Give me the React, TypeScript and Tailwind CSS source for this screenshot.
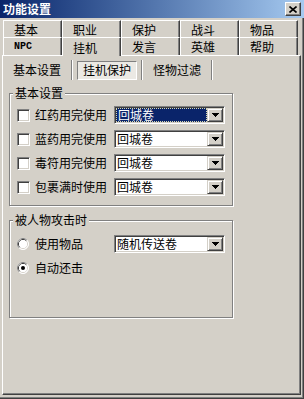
import React from "react";

const cjk = "font-['Noto_Sans_CJK_SC','Noto_Sans',sans-serif]";

const raised =
  "border border-t-white border-l-white border-r-[#404040] border-b-[#404040] shadow-[inset_-1px_-1px_0_#808080]";
const sunken =
  "border border-t-[#808080] border-l-[#808080] border-r-white border-b-white shadow-[inset_1px_1px_0_#404040,inset_-1px_-1px_0_#d4d0c8]";

function CloseBtn() {
  return (
    <div className={`w-[16px] h-[14px] bg-[#d4d0c8] flex items-center justify-center ${raised}`}>
      <svg width="8" height="7" viewBox="0 0 8 7">
        <path d="M0.5 0.5L7.5 6.5M7.5 0.5L0.5 6.5" stroke="#000" strokeWidth="1.6" />
      </svg>
    </div>
  );
}

function Tab({ label, active, mono }: { label: string; active?: boolean; mono?: boolean }) {
  return (
    <div
      className={`w-[59px] ${
        active ? "relative z-10 h-[19px] bg-[#d4d0c8]" : "h-full"
      } border-t border-l border-r border-t-white border-l-white border-r-[#404040] shadow-[inset_-1px_0_0_#808080] pl-[10px] pt-[1px] flex items-center leading-none`}
    >
      <span className={mono ? "font-['Liberation_Mono',monospace] font-bold text-[10px]" : ""}>{label}</span>
    </div>
  );
}

function SubTab({ label, active }: { label: string; active?: boolean }) {
  return (
    <div className="flex h-[20px]">
      <div className="w-[68px] flex items-center justify-center leading-none">
        {active ? (
          <div className="w-[60px] h-[19px] border border-t-[#808080] border-l-[#808080] border-r-white border-b-white bg-[#ebe9e4] flex items-center justify-center">
            {label}
          </div>
        ) : (
          label
        )}
      </div>
      <div className="w-[2px] h-full border-l border-l-[#808080] border-r border-r-white" />
    </div>
  );
}

function Arrow() {
  return (
    <svg width="7" height="4" viewBox="0 0 7 4">
      <path d="M0 0h7v1H0zM1 1h5v1H1zM2 2h3v1H2zM3 3h1v1H3z" fill="#000" />
    </svg>
  );
}

function Combo({ value, selected }: { value: string; selected?: boolean }) {
  return (
    <div className={`w-[111px] h-[18px] bg-white flex p-[1px] ${sunken}`}>
      <div
        className={`flex-1 flex items-center pl-[1px] leading-none ${
          selected ? "bg-[#0a246a] text-white border border-dotted border-[#d8d8b0]" : ""
        }`}
      >
        {value}
      </div>
      <div className="w-[16px] h-full bg-[#d4d0c8] border border-t-[#d4d0c8] border-l-[#d4d0c8] border-r-[#404040] border-b-[#404040] shadow-[inset_1px_1px_0_#fff,inset_-1px_-1px_0_#808080] flex items-center justify-center">
        <Arrow />
      </div>
    </div>
  );
}

function CheckRow({ label, value, selected }: { label: string; value: string; selected?: boolean }) {
  return (
    <div className="flex items-center h-[18px]">
      <div className={`ml-[7px] w-[13px] h-[13px] bg-white ${sunken}`} />
      <span className="ml-[5px] w-[79px] leading-none">{label}</span>
      <Combo value={value} selected={selected} />
    </div>
  );
}

function Radio({ checked }: { checked?: boolean }) {
  return (
    <svg width="12" height="12" viewBox="0 0 12 12" className="ml-[7px] shrink-0">
      <circle cx="6" cy="6" r="5.5" fill="#fff" stroke="#fff" />
      <path d="M2.11 9.89A5.5 5.5 0 0 1 9.89 2.11" stroke="#808080" fill="none" />
      <circle cx="6" cy="6" r="4.5" fill="none" stroke="#d4d0c8" />
      <path d="M2.82 9.18A4.5 4.5 0 0 1 9.18 2.82" stroke="#404040" fill="none" />
      <circle cx="6" cy="6" r="4" fill="#fff" />
      {checked && <circle cx="6" cy="6" r="2" fill="#000" />}
    </svg>
  );
}

function Group({ title, children, className }: { title: string; children: React.ReactNode; className?: string }) {
  return (
    <fieldset
      className={`ml-[6px] w-[224px] border border-[#808080] shadow-[inset_1px_1px_0_#fff,1px_1px_0_#fff] ${className ?? ""}`}
    >
      <legend className="ml-[3px] px-[2px] leading-[14px] bg-[#d4d0c8]">{title}</legend>
      {children}
    </fieldset>
  );
}

export default function App() {
  return (
    <div className={`w-[304px] h-[399px] bg-[#d4d0c8] flex flex-col overflow-hidden ${cjk} text-[12px] text-black`}>
      <div className="h-[18px] shrink-0 flex items-center justify-between pl-[3px] pr-[3px] bg-linear-to-r from-[#0a246a] to-[#a6caf0]">
        <span className="text-white font-bold leading-none">功能设置</span>
        <CloseBtn />
      </div>

      <div className="flex-1 flex flex-col border-r border-b border-r-[#404040] border-b-[#404040] shadow-[inset_-1px_-1px_0_#808080]">
        <div className="h-[2px] shrink-0" />
        <div className="flex pl-[3px] h-[17px] shrink-0">
          <Tab label="基本" />
          <Tab label="职业" />
          <Tab label="保护" />
          <Tab label="战斗" />
          <Tab label="物品" />
        </div>
        <div className="flex pl-[3px] h-[18px] shrink-0">
          <Tab label="NPC" mono />
          <Tab label="挂机" active />
          <Tab label="发言" />
          <Tab label="英雄" />
          <Tab label="帮助" />
        </div>

        <div className={`ml-[2px] w-[299px] h-[340px] shrink-0 flex flex-col ${raised}`}>
          <div className="flex pt-[4px]">
            <SubTab label="基本设置" />
            <SubTab label="挂机保护" active />
            <SubTab label="怪物过滤" />
          </div>

          <Group title="基本设置" className="mt-[6px]">
            <div className="flex flex-col gap-[6px] pt-[6px] pb-[9px]">
              <CheckRow label="红药用完使用" value="回城卷" selected />
              <CheckRow label="蓝药用完使用" value="回城卷" />
              <CheckRow label="毒符用完使用" value="回城卷" />
              <CheckRow label="包裹满时使用" value="回城卷" />
            </div>
          </Group>

          <Group title="被人物攻击时" className="mt-[7px]">
            <div className="flex flex-col gap-[6px] pt-[8px] pb-[40px]">
              <div className="flex items-center h-[18px]">
                <Radio />
                <span className="ml-[6px] w-[79px] leading-none">使用物品</span>
                <Combo value="随机传送卷" />
              </div>
              <div className="flex items-center h-[18px]">
                <Radio checked />
                <span className="ml-[6px] leading-none">自动还击</span>
              </div>
            </div>
          </Group>
        </div>
      </div>
    </div>
  );
}
